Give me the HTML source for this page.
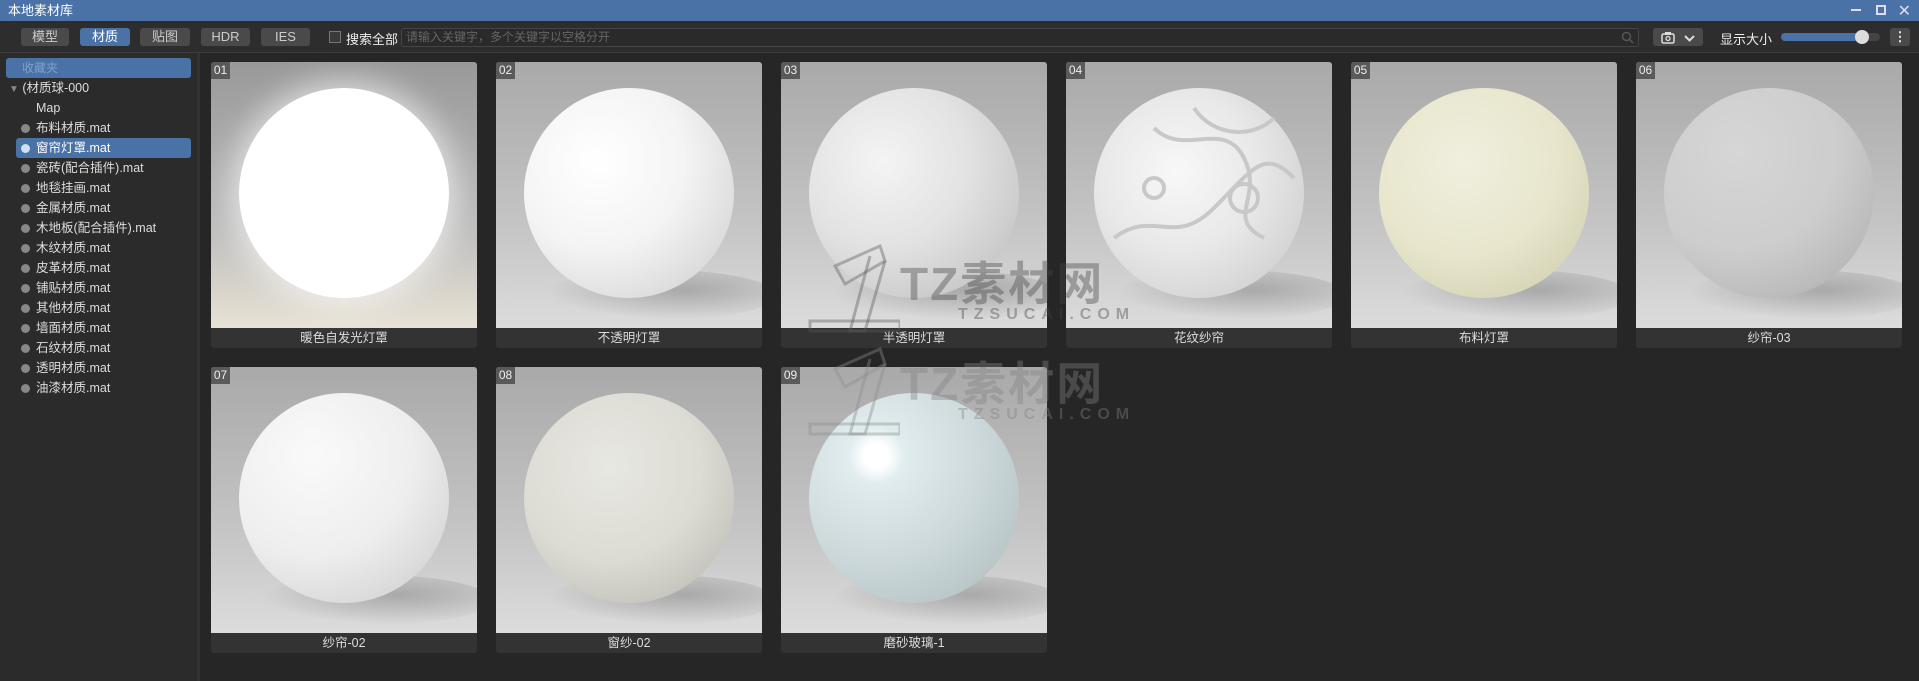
<!DOCTYPE html>
<html><head><meta charset="utf-8"><style>
*{margin:0;padding:0;box-sizing:border-box}
body{width:1919px;height:681px;background:#262626;font-family:"Liberation Sans","Noto Sans CJK SC",sans-serif;color:#ddd;position:relative;overflow:hidden;font-size:13px}
.abs{position:absolute}
.title{left:0;top:0;width:1919px;height:21px;background:#4a72a6;color:#fff;font-size:13px;line-height:21px;padding-left:8px}
.tb{left:0;top:21px;width:1919px;height:31px;background:#2d2d2d}
.btn{position:absolute;top:28px;height:18px;background:#4a4a4a;border-radius:3px;color:#ccc;font-size:13px;line-height:18px;text-align:center}
.side{left:0;top:53px;width:197px;height:628px;background:#2b2b2b}
.div{left:197px;top:53px;width:3px;height:628px;background:#333}
.item{position:absolute;left:21px;font-size:12.5px;color:#ddd;line-height:20px;height:20px}
.dot{display:inline-block;width:9px;height:9px;border-radius:50%;background:#888;margin-right:6px;vertical-align:-1px}
.card{position:absolute;width:266px;height:286px;background:#333;border-radius:3px;overflow:hidden}
.img{position:absolute;left:0;top:0;width:266px;height:266px;background:linear-gradient(#a9a9a9,#c4c4c4 60%,#dcdcdc)}
.num{position:absolute;left:0;top:0;width:19px;height:17px;background:#5a5a5a;color:#eee;font-size:12px;line-height:17px;text-align:center}
.lab{position:absolute;left:0;top:266px;width:266px;height:20px;line-height:20px;text-align:center;font-size:12.5px;color:#ddd}
.sh{position:absolute;left:50px;top:208px;width:230px;height:50px;border-radius:50%;background:radial-gradient(ellipse at 60% 40%,rgba(90,90,90,.35),rgba(90,90,90,0) 70%)}
.sp{position:absolute;left:28px;top:26px;width:210px;height:210px;border-radius:50%}
.wm{position:absolute;color:rgba(70,70,70,.4);font-weight:bold}
</style></head><body>
<div class="abs title">本地素材库</div>
<div class="abs" style="right:58px;top:9px;width:10px;height:2px;background:#dde"></div>
<div class="abs" style="right:33px;top:5px;width:10px;height:10px;border:2px solid #dde"></div>
<div class="abs" style="right:8px;top:1px;color:#dde;font-size:16px">✕</div>
<div class="abs tb"></div>
<div class="btn" style="left:21px;width:48px">模型</div>
<div class="btn" style="left:80px;width:50px;background:#4a72a6;color:#fff">材质</div>
<div class="btn" style="left:140px;width:50px">贴图</div>
<div class="btn" style="left:201px;width:49px">HDR</div>
<div class="btn" style="left:261px;width:49px">IES</div>
<div class="abs" style="left:329px;top:31px;width:12px;height:12px;border:1px solid #777;background:#3a3a3a"></div>
<div class="abs" style="left:346px;top:29px;color:#eee;font-size:13px">搜索全部</div>
<div class="abs" style="left:401px;top:28px;width:1238px;height:19px;border:1px solid #444;border-radius:3px;background:#2a2a2a;color:#666;font-size:12px;line-height:17px;padding-left:4px">请输入关键字，多个关键字以空格分开</div>
<svg class="abs" style="left:1621px;top:31px" width="13" height="13"><circle cx="5.5" cy="5.5" r="4" fill="none" stroke="#555" stroke-width="1.5"/><line x1="8.5" y1="8.5" x2="12" y2="12" stroke="#555" stroke-width="1.5"/></svg>
<div class="btn" style="left:1653px;width:50px"></div>
<svg class="abs" style="left:1661px;top:31px" width="40" height="14"><rect x="1" y="3" width="12" height="9" rx="1.5" fill="none" stroke="#ddd" stroke-width="1.5"/><rect x="4" y="1" width="6" height="3" fill="#ddd"/><circle cx="7" cy="7.5" r="2" fill="none" stroke="#ddd" stroke-width="1.3"/><path d="M24 5 L28.5 9.5 L33 5" fill="none" stroke="#ddd" stroke-width="2"/></svg>
<div class="abs" style="left:1720px;top:29px;color:#eee;font-size:13px">显示大小</div>
<div class="abs" style="left:1781px;top:33px;width:99px;height:8px;border-radius:4px;background:#444"></div>
<div class="abs" style="left:1781px;top:33px;width:82px;height:8px;border-radius:4px;background:#4a72a6"></div>
<div class="abs" style="left:1855px;top:30px;width:14px;height:14px;border-radius:50%;background:#ddd"></div>
<div class="btn" style="left:1890px;width:20px;color:#eee;font-weight:bold">⋮</div>
<div class="abs" style="left:0;top:52px;width:1919px;height:1px;background:#3c3c3c"></div>
<div class="abs side"></div>
<div class="abs div"></div>
<div class="abs" style="left:6px;top:58px;width:185px;height:20px;background:#4a72a6;border-radius:3px;color:#7fa0cc;font-size:12px;line-height:20px;padding-left:16px">收藏夹</div>
<div class="item" style="left:9px;top:78px"><span style="color:#888;font-size:10px">▼</span> (材质球-000</div>
<div class="item" style="left:36px;top:98px">Map</div>
<div class="abs" style="left:16px;top:138px;width:175px;height:20px;background:#4a72a6;border-radius:3px"></div>
<div class="item" style="top:118px"><span class="dot"></span>布料材质.mat</div>
<div class="item" style="top:138px;color:#fff"><span class="dot" style="background:#cfe0f5"></span>窗帘灯罩.mat</div>
<div class="item" style="top:158px"><span class="dot"></span>瓷砖(配合插件).mat</div>
<div class="item" style="top:178px"><span class="dot"></span>地毯挂画.mat</div>
<div class="item" style="top:198px"><span class="dot"></span>金属材质.mat</div>
<div class="item" style="top:218px"><span class="dot"></span>木地板(配合插件).mat</div>
<div class="item" style="top:238px"><span class="dot"></span>木纹材质.mat</div>
<div class="item" style="top:258px"><span class="dot"></span>皮革材质.mat</div>
<div class="item" style="top:278px"><span class="dot"></span>铺贴材质.mat</div>
<div class="item" style="top:298px"><span class="dot"></span>其他材质.mat</div>
<div class="item" style="top:318px"><span class="dot"></span>墙面材质.mat</div>
<div class="item" style="top:338px"><span class="dot"></span>石纹材质.mat</div>
<div class="item" style="top:358px"><span class="dot"></span>透明材质.mat</div>
<div class="item" style="top:378px"><span class="dot"></span>油漆材质.mat</div>

<div class="card" style="left:211px;top:62px"><div class="img" style="background:linear-gradient(#999,#bbb 60%,#e8e2d5)"><div class="sp" style="background:radial-gradient(circle at 50% 50%,#fff 90%,#f0f0f0);box-shadow:0 0 30px 8px rgba(255,255,255,.6)"></div></div><div class="num">01</div><div class="lab">暖色自发光灯罩</div></div>
<div class="card" style="left:496px;top:62px"><div class="img"><div class="sh"></div><div class="sp" style="background:radial-gradient(circle at 35% 35%,#fff,#f4f4f4 45%,#d6d6d6 85%,#c8c8c8)"></div></div><div class="num">02</div><div class="lab">不透明灯罩</div></div>
<div class="card" style="left:781px;top:62px"><div class="img"><div class="sh"></div><div class="sp" style="background:radial-gradient(circle at 35% 35%,#f4f4f4,#e2e2e2 45%,#c4c4c4 85%,#b8b8b8)"></div></div><div class="num">03</div><div class="lab">半透明灯罩</div></div>
<div class="card" style="left:1066px;top:62px"><div class="img"><div class="sh"></div><div class="sp" style="background:radial-gradient(circle at 40% 40%,#f8f8f8,#e8e8e8 45%,#cfcfcf 85%,#bbb)"><svg width="210" height="210"><g fill="none" stroke="#c8c8c8" stroke-width="4"><path d="M20 150 C60 120 80 160 120 120 S170 60 200 90"/><path d="M60 40 C90 70 130 30 150 70 S130 130 170 150"/><path d="M100 20 C120 50 160 50 180 30"/><circle cx="150" cy="110" r="14"/><circle cx="60" cy="100" r="10"/></g></svg></div></div><div class="num">04</div><div class="lab">花纹纱帘</div></div>
<div class="card" style="left:1351px;top:62px"><div class="img"><div class="sh"></div><div class="sp" style="background:radial-gradient(circle at 40% 35%,#f0efdf,#e8e6cc 50%,#d4d2b4 85%,#c8c6a8)"></div></div><div class="num">05</div><div class="lab">布料灯罩</div></div>
<div class="card" style="left:1636px;top:62px"><div class="img"><div class="sh"></div><div class="sp" style="background:radial-gradient(circle at 35% 30%,#d6d6d6,#cdcdcd 50%,#b5b5b5 85%,#a8a8a8)"></div></div><div class="num">06</div><div class="lab">纱帘-03</div></div>
<div class="card" style="left:211px;top:367px"><div class="img"><div class="sh"></div><div class="sp" style="background:radial-gradient(circle at 35% 30%,#fafafa,#eee 50%,#d4d4d4 85%,#c6c6c6)"></div></div><div class="num">07</div><div class="lab">纱帘-02</div></div>
<div class="card" style="left:496px;top:367px"><div class="img"><div class="sh"></div><div class="sp" style="background:radial-gradient(circle at 40% 35%,#e8e8e2,#dcdcd4 50%,#c0c0b8 85%,#b0b0a8)"></div></div><div class="num">08</div><div class="lab">窗纱-02</div></div>
<div class="card" style="left:781px;top:367px"><div class="img"><div class="sh"></div><div class="sp" style="background:radial-gradient(circle at 32% 30%,#fff 6%,#e0ecee 14%,#cdd9db 50%,#b6c3c5 85%,#a9b4b6)"></div></div><div class="num">09</div><div class="lab">磨砂玻璃-1</div></div>

<div class="wm" style="left:900px;top:248px;font-size:46px;letter-spacing:2px">TZ素材网</div>
<div class="wm" style="left:958px;top:306px;font-size:16px;letter-spacing:6px">TZSUCAI.COM</div>
<div class="wm" style="left:900px;top:348px;font-size:46px;letter-spacing:2px;color:rgba(130,130,130,.4)">TZ素材网</div>
<div class="wm" style="left:958px;top:406px;font-size:16px;letter-spacing:6px;color:rgba(130,130,130,.4)">TZSUCAI.COM</div>
<svg class="abs" style="left:805px;top:236px" width="95" height="200"><g fill="none" stroke="rgba(90,90,90,.4)" stroke-width="3"><path d="M30 30 L75 10 L80 25 L40 48 Z"/><path d="M65 20 L45 95 L60 95 L80 25"/><path d="M5 85 L95 85 L95 95 L5 95 Z"/></g><g fill="none" stroke="rgba(140,140,140,.4)" stroke-width="3" transform="translate(0,103)"><path d="M30 30 L75 10 L80 25 L40 48 Z"/><path d="M65 20 L45 95 L60 95 L80 25"/><path d="M5 85 L95 85 L95 95 L5 95 Z"/></g></svg>
</body></html>
